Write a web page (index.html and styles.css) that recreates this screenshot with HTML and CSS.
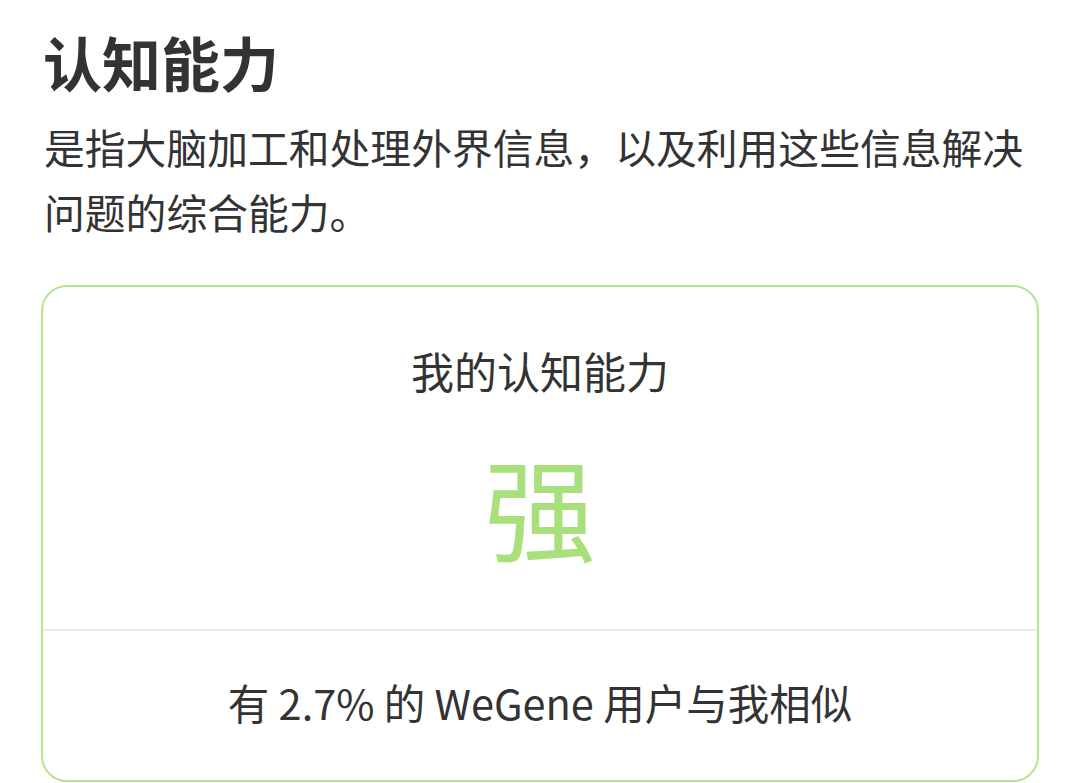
FILE: index.html
```html
<!DOCTYPE html>
<html lang="zh-CN">
<head>
<meta charset="utf-8">
<link rel="stylesheet" href="styles.css">
</head>
<body>
<div class="page">
  <h1 class="title">认知能力</h1>
  <p class="desc">是指大脑加工和处理外界信息，以及利用这些信息解决问题的综合能力。</p>
  <div class="card">
    <div class="card-top">
      <div class="card-label">我的认知能力</div>
      <div class="card-value">强</div>
    </div>
    <div class="card-bottom">有 2.7% 的 WeGene 用户与我相似</div>
  </div>
</div>
</body>
</html>
```
FILE: styles.css
```css
html, body {
  margin: 0;
  padding: 0;
  background: #ffffff;
}
body {
  font-family: "Noto Sans CJK SC", "Noto Sans", sans-serif;
  color: #333333;
}
.page {
  padding: 22px 41px 0 41px;
}
.title {
  margin: 0 0 0 2px;
  font-size: 59px;
  font-weight: 700;
  line-height: 80px;
  color: #333333;
}
.desc {
  margin: 12px 0 0 3px;
  font-size: 40.8px;
  line-height: 65px;
  color: #333333;
}
.card {
  margin-top: 41px;
  border: 2px solid #b7e493;
  border-radius: 26px;
  height: 497px;
  display: flex;
  flex-direction: column;
  box-sizing: border-box;
}
.card-top {
  height: 342px;
  border-bottom: 2px solid #ebebeb;
  display: flex;
  flex-direction: column;
  align-items: center;
}
.card-label {
  margin-top: 53px;
  font-size: 43px;
  line-height: 60px;
}
.card-value {
  margin-top: 40px;
  font-size: 112px;
  line-height: 130px;
  color: #a9e07b;
}
.card-bottom {
  flex: 1;
  display: flex;
  align-items: center;
  justify-content: center;
  font-size: 41.5px;
  padding-bottom: 7px;
}
```
